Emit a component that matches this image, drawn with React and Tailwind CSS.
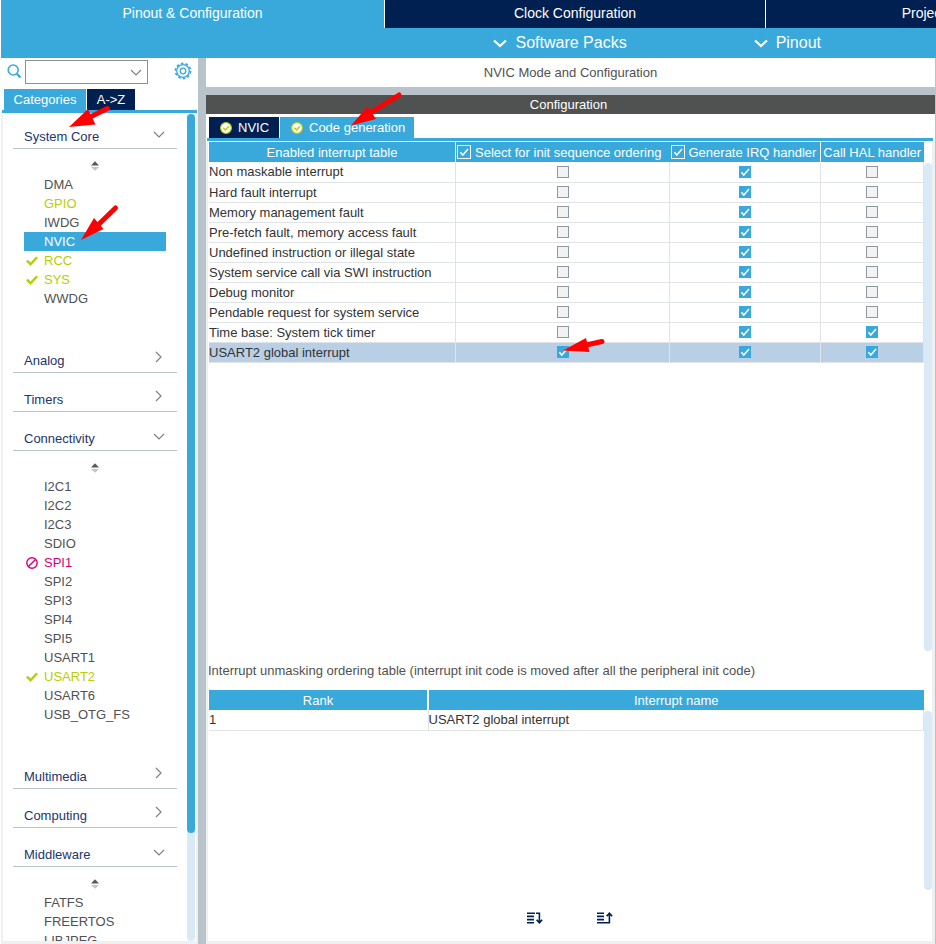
const GREY = "#808080";

function ChevronDown({ className }) {
  return (
    <svg className={className} width="12" height="7" viewBox="0 0 12 7" fill="none" stroke={GREY} strokeWidth="1.2" aria-hidden="true">
      <path d="M1 1l5 5 5-5" />
    </svg>
  );
}

function ChevronRight({ className }) {
  return (
    <svg className={className} width="7" height="12" viewBox="0 0 7 12" fill="none" stroke={GREY} strokeWidth="1.2" aria-hidden="true">
      <path d="M1 1l5 5-5 5" />
    </svg>
  );
}

function MenuChevron() {
  return (
    <svg width="14" height="9" viewBox="0 0 14 9" fill="none" stroke="white" strokeWidth="2.2" aria-hidden="true">
      <path d="M1 1.5l6 5.500 6-5.500" />
    </svg>
  );
}

function TabCheck() {
  return (
    <svg width="12" height="12" viewBox="0 0 12 12" aria-hidden="true">
      <circle cx="6" cy="6" r="5.4" fill="white" stroke="#bbcc01" strokeWidth="1.2" />
      <path d="M3.3 5.8l2.1 2.200 3.500-3.700" fill="none" stroke="#bbcc01" strokeWidth="1.4" />
    </svg>
  );
}

function SearchIcon() {
  return (
    <svg width="14" height="14" viewBox="0 0 14 14" fill="none" stroke="#39a9dc" aria-hidden="true">
      <circle cx="6.2" cy="6" r="5" strokeWidth="1.6" />
      <path d="M9.8 9.800L13.400 13.500" strokeWidth="2.2" />
    </svg>
  );
}

function Gear() {
  return (
    <svg width="18" height="18" viewBox="0 0 18 18" fill="none" stroke="#39a9dc" aria-hidden="true">
      <circle cx="9" cy="9" r="6.3" strokeWidth="1.3" />
      <circle cx="9" cy="9" r="7.6" strokeWidth="1.6" strokeDasharray="2.6 2.175" />
      <circle cx="9" cy="9" r="2.8" strokeWidth="1.3" />
    </svg>
  );
}

function SortArrows() {
  return (
    <svg width="8" height="10" viewBox="0 0 8 10" aria-hidden="true">
      <path d="M0 4.4L4 0.3 8 4.4z" fill="#585858" />
      <path d="M0 6L4 9.800 8 6z" fill="#c4c4c4" />
    </svg>
  );
}

function StatusIcon({ status }) {
  if (status === "ok") {
    return (
      <svg width="12" height="10" viewBox="0 0 12 10" fill="none" stroke="#bbcc01" strokeWidth="2.4" aria-hidden="true">
        <path d="M0.9 4.600l3.600 3.600 6.600-7" />
      </svg>
    );
  }
  if (status === "blocked") {
    return (
      <svg width="12" height="12" viewBox="0 0 12 12" fill="none" stroke="#d4007a" strokeWidth="1.4" aria-hidden="true">
        <circle cx="6" cy="6" r="5.2" />
        <path d="M2.4 9.600l7.200-7.200" />
      </svg>
    );
  }
  return null;
}

const SECTIONS = [
  {
    name: "System Core",
    items: [
      { name: "DMA" },
      { name: "GPIO", tone: "ok" },
      { name: "IWDG" },
      { name: "NVIC", tone: "selected" },
      { name: "RCC", tone: "ok", status: "ok" },
      { name: "SYS", tone: "ok", status: "ok" },
      { name: "WWDG" },
    ],
  },
  { name: "Analog" },
  { name: "Timers" },
  {
    name: "Connectivity",
    items: [
      { name: "I2C1" },
      { name: "I2C2" },
      { name: "I2C3" },
      { name: "SDIO" },
      { name: "SPI1", tone: "blocked", status: "blocked" },
      { name: "SPI2" },
      { name: "SPI3" },
      { name: "SPI4" },
      { name: "SPI5" },
      { name: "USART1" },
      { name: "USART2", tone: "ok", status: "ok" },
      { name: "USART6" },
      { name: "USB_OTG_FS" },
    ],
  },
  { name: "Multimedia" },
  { name: "Computing" },
  {
    name: "Middleware",
    items: [{ name: "FATFS" }, { name: "FREERTOS" }, { name: "LIBJPEG" }],
  },
];

const TONES = {
  ok: "text-[#bbcc01]",
  blocked: "text-[#d4007a]",
  selected: "bg-[#39a9dc] text-white",
  plain: "text-[#515151]",
};

function Section({ name, items }) {
  return (
    <section>
      <button className="flex h-[39px] w-full items-end justify-between border-b border-[#b9c4ca] pr-3 pb-[3px] pl-[11px] text-left text-[#23356b]">
        <span className="leading-4">{name}</span>
        {items ? <ChevronDown className="mb-[7px]" /> : <ChevronRight className="mr-[3px] mb-1.5" />}
      </button>
      {items && (
        <div className="pb-[26px]">
          <div className="flex h-[26px] items-center justify-center pt-2">
            <SortArrows />
          </div>
          <ul className="mx-[11px]">
            {items.map((item) => (
              <li key={item.name}>
                <button className={`flex h-[19px] w-full items-center text-left ${TONES[item.tone ?? "plain"]}`}>
                  <span className="flex w-5 shrink-0 pl-0.5">
                    <StatusIcon status={item.status} />
                  </span>
                  {item.name}
                </button>
              </li>
            ))}
          </ul>
        </div>
      )}
    </section>
  );
}

function Sidebar() {
  return (
    <aside className="flex w-[197px] shrink-0 flex-col">
      <div className="flex h-[31px] shrink-0 items-start pt-0.5 pl-1.5">
        <div className="pt-1">
          <SearchIcon />
        </div>
        <div className="relative ml-1">
          <input type="text" aria-label="Search peripherals" className="block h-6 w-[123px] border border-[#8b9297] bg-white pr-6 pl-1 outline-none" />
          <ChevronDown className="pointer-events-none absolute top-[9px] right-[6px]" />
        </div>
        <button aria-label="Settings" className="ml-[26px] pt-0.5">
          <Gear />
        </button>
      </div>
      <div className="flex h-[21px] shrink-0 gap-px pl-[3px] text-white">
        <button className="w-[82px] bg-[#39a9dc]">Categories</button>
        <button className="w-12 bg-[#002052]">A-&gt;Z</button>
      </div>
      <div className="flex min-h-0 flex-1 flex-col">
        <div className="mr-px ml-px h-[3px] shrink-0 bg-[#39a9dc]" />
        <div className="flex min-h-0 flex-1 border-b-[3px] border-l-2 border-[#f0f0f0]">
          <div className="min-h-0 flex-1 overflow-hidden px-2.5">
            <div className="-mt-[3px]">
              {SECTIONS.map((section) => (
                <Section key={section.name} {...section} />
              ))}
            </div>
          </div>
          <div className="mt-px w-2 rounded-full bg-[#d9e9f6]">
            <div className="h-[87%] rounded-full bg-[#39a9dc]" />
          </div>
          <div className="ml-px w-0.5 bg-[#f0f0f0]" />
        </div>
      </div>
    </aside>
  );
}

const ROWS = [
  ["Non maskable interrupt", false, true, false],
  ["Hard fault interrupt", false, true, false],
  ["Memory management fault", false, true, false],
  ["Pre-fetch fault, memory access fault", false, true, false],
  ["Undefined instruction or illegal state", false, true, false],
  ["System service call via SWI instruction", false, true, false],
  ["Debug monitor", false, true, false],
  ["Pendable request for system service", false, true, false],
  ["Time base: System tick timer", false, true, true],
  ["USART2 global interrupt", true, true, true],
];

const COLUMNS = ["Select for init sequence ordering", "Generate IRQ handler", "Call HAL handler"];

function Tick({ size }) {
  return (
    <svg className="pointer-events-none invisible absolute inset-0 m-auto peer-checked:visible" width={size} height={size} viewBox="0 0 12 12" fill="none" stroke="white" strokeWidth="1.5" aria-hidden="true">
      <path d="M2.4 6.200l2.400 2.900L10 3" />
    </svg>
  );
}

function CellCheckbox({ label, checked }) {
  return (
    <span className="relative mx-auto block size-3">
      <input
        type="checkbox"
        aria-label={label}
        defaultChecked={checked}
        className="peer block size-3 appearance-none border border-[#8f979c] bg-[#f0f2f4] checked:border-[#39a9dc] checked:bg-[#39a9dc]"
      />
      <Tick size={12} />
    </span>
  );
}

function HeaderCheckbox({ label }) {
  return (
    <label className="flex items-center gap-1 pl-px whitespace-nowrap">
      <span className="relative size-3.5 shrink-0">
        <input type="checkbox" defaultChecked className="peer block size-3.5 appearance-none border border-white bg-[#39a9dc]" />
        <Tick size={12} />
      </span>
      {label}
    </label>
  );
}

function InterruptTable() {
  return (
    <table className="w-full table-fixed border-collapse">
      <colgroup>
        <col />
        <col className="w-[214px]" />
        <col className="w-[151px]" />
        <col className="w-[103px]" />
      </colgroup>
      <thead>
        <tr className="h-5 text-white">
          <th className="border-r border-white bg-[#39a9dc] p-0 font-normal">Enabled interrupt table</th>
          <th className="bg-[#39a9dc] p-0 font-normal"><HeaderCheckbox label={COLUMNS[0]} /></th>
          <th className="bg-[#39a9dc] p-0 font-normal"><HeaderCheckbox label={COLUMNS[1]} /></th>
          <th className="border-l border-white bg-[#39a9dc] p-0 font-normal whitespace-nowrap">{COLUMNS[2]}</th>
        </tr>
      </thead>
      <tbody className="text-[#333]">
        {ROWS.map(([name, ...flags], index) => (
          <tr key={name} className={`h-5 border-b border-[#e1e4e7] ${index === ROWS.length - 1 ? "bg-[#b8cfe5]" : ""}`}>
            <td className="border-r border-[#e1e4e7] p-0">{name}</td>
            {flags.map((checked, column) => (
              <td key={COLUMNS[column]} className="border-r border-[#e1e4e7] p-0">
                <CellCheckbox label={`${name}: ${COLUMNS[column]}`} checked={checked} />
              </td>
            ))}
          </tr>
        ))}
      </tbody>
    </table>
  );
}

function OrderingTable() {
  return (
    <table className="w-full table-fixed border-collapse">
      <colgroup>
        <col className="w-[219px]" />
        <col />
      </colgroup>
      <thead>
        <tr className="h-5 text-white">
          <th className="border-r-2 border-white bg-[#39a9dc] p-0 font-normal">Rank</th>
          <th className="bg-[#39a9dc] p-0 font-normal">Interrupt name</th>
        </tr>
      </thead>
      <tbody className="text-[#333]">
        <tr className="h-5 border-b border-[#e1e4e7]">
          <td className="border-r border-[#e1e4e7] p-0">1</td>
          <td className="border-r border-[#e1e4e7] p-0">USART2 global interrupt</td>
        </tr>
      </tbody>
    </table>
  );
}

function MoveIcon({ up }) {
  return (
    <svg width="16" height="12" viewBox="0 0 16 12" fill="none" stroke="#002052" strokeWidth="1.6" aria-hidden="true">
      {up ? (
        <path d="M0 1.200h7M0 4.400h7M0 7.600h7M0 10.800h12.400M12.400 11.400V1.500M9.600 4.200l2.800-3 2.800 3" />
      ) : (
        <path d="M0 1.200h8M0 4.400h7M0 7.600h7M0 10.800h7M9 1.200h3.400M12.400 0.600v10M9.600 7.800l2.800 3 2.800-3" />
      )}
    </svg>
  );
}

function MainPanel() {
  return (
    <main className="mr-px flex min-w-0 flex-1 flex-col">
      <h1 className="flex h-[29px] shrink-0 items-center justify-center bg-white text-[#515151]">NVIC Mode and Configuration</h1>
      <h2 className="mt-2 flex h-[19px] shrink-0 items-center justify-center bg-[#4f5251] pr-1 text-white">Configuration</h2>
      <div className="flex min-h-0 flex-1 flex-col border-b-[3px] border-[#f0f0f0] bg-white pt-[3px]">
        <div className="flex h-[21px] shrink-0 gap-px pl-[3px] text-white">
          <button className="flex w-[70px] items-center gap-1.5 bg-[#002052] pl-[11px]">
            <TabCheck />
            NVIC
          </button>
          <button className="flex w-[134px] items-center gap-1.5 bg-[#39a9dc] pl-[11px]">
            <TabCheck />
            Code generation
          </button>
        </div>
        <div className="mr-0.5 ml-px h-[3px] shrink-0 bg-[#39a9dc]" />
        <div className="flex min-h-0 flex-1 flex-col border-r-[3px] border-l-2 border-[#f0f0f0]">
          <div className="flex min-h-0 flex-1 pt-px">
            <div className="min-w-0 flex-1 pl-px">
              <InterruptTable />
            </div>
            <div className="mt-[21px] w-2 rounded-full bg-[#d9e9f6]" />
          </div>
          <p className="mt-3 h-4 shrink-0 leading-4 text-[#515151]">
            Interrupt unmasking ordering table (interrupt init code is moved after all the peripheral init code)
          </p>
          <div className="mt-[11px] flex h-[200px] shrink-0">
            <div className="min-w-0 flex-1 pl-px">
              <OrderingTable />
            </div>
            <div className="mt-[21px] w-2 rounded-full bg-[#d9e9f6]" />
          </div>
          <div className="flex h-[51px] shrink-0 items-start justify-center gap-[54px] pt-[22px]">
            <button aria-label="Move down"><MoveIcon /></button>
            <button aria-label="Move up"><MoveIcon up /></button>
          </div>
        </div>
      </div>
    </main>
  );
}

function Header() {
  return (
    <header className="shrink-0 bg-[#39a9dc] text-white">
      <nav className="flex h-7 overflow-hidden text-sm">
        <button className="h-7 w-[383px] shrink-0 pb-0.5">Pinout &amp; Configuration</button>
        <button className="h-7 w-[381px] shrink-0 border-l border-white bg-[#002052] pb-0.5">Clock Configuration</button>
        <button className="h-7 min-w-[375px] flex-1 border-l border-white bg-[#002052] pb-0.5">Project Manager</button>
      </nav>
      <div className="flex h-[30px] items-center justify-end gap-[127px] pr-[115px] text-base">
        <button className="flex items-center gap-2">
          <MenuChevron />
          Software Packs
        </button>
        <button className="flex items-center gap-2">
          <MenuChevron />
          Pinout
        </button>
      </div>
    </header>
  );
}

function Annotations() {
  return (
    <svg className="pointer-events-none absolute top-0 left-0" width="936" height="400" viewBox="0 0 936 400" fill="#ff0000" stroke="#ff0000" aria-hidden="true">
      <path d="M69 127l19-18 7.500 15.500z" stroke="none" />
      <path d="M88 118l19.500-9.500" strokeWidth="5" strokeLinecap="round" />
      <path d="M351 125.500l16.500-19 8.500 12.500z" stroke="none" />
      <path d="M370 113l29-18" strokeWidth="5" strokeLinecap="round" />
      <path d="M81 240l13-22 9.500 11z" stroke="none" />
      <path d="M97 226l18.500-18" strokeWidth="5" strokeLinecap="round" />
      <path d="M563 350.500l23-12.500 3.500 14z" stroke="none" />
      <path d="M586 345l16-3.500" strokeWidth="5" strokeLinecap="round" />
    </svg>
  );
}

export default function App() {
  return (
    <div className="relative flex h-screen flex-col overflow-hidden bg-white pl-px font-['Liberation_Sans',Arial,sans-serif] text-[13px] leading-[19px]">
      <Header />
      <div className="flex min-h-0 flex-1">
        <Sidebar />
        <div className="flex min-w-0 flex-1 bg-[#b9c4ca] pl-2">
          <MainPanel />
        </div>
      </div>
      <Annotations />
    </div>
  );
}
